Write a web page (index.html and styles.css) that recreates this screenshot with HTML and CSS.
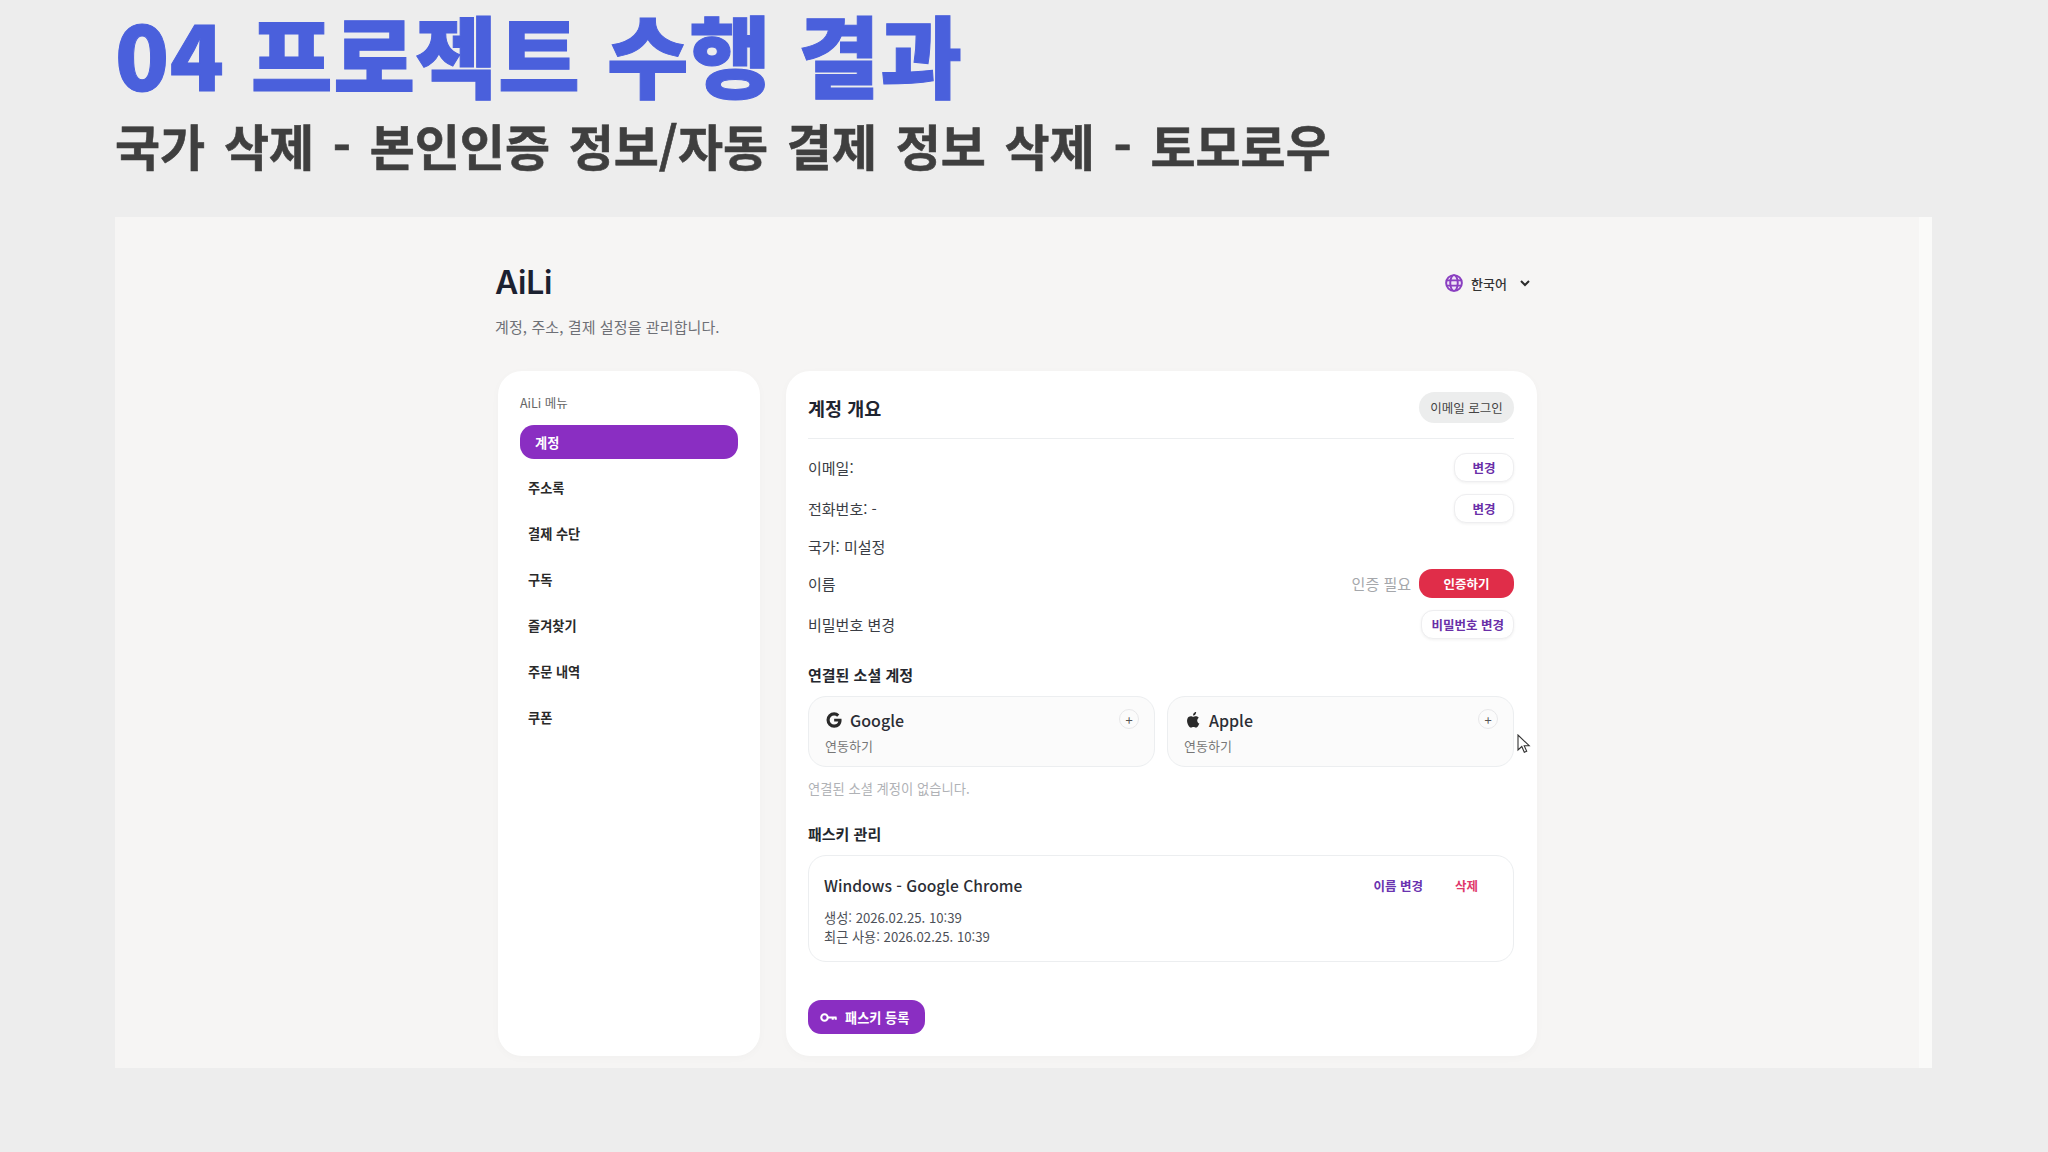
FILE: index.html
```html
<!DOCTYPE html>
<html lang="ko">
<head>
<meta charset="utf-8">
<title>04 프로젝트 수행 결과</title>
<link rel="stylesheet" href="styles.css">
</head>
<body>
<div class="slide">
  <header class="slide-head">
    <h1 class="slide-title">04 프로젝트 수행 결과</h1>
    <h2 class="slide-sub">국가 삭제 - 본인인증 정보/자동 결제 정보 삭제 - 토모로우</h2>
  </header>
  <div class="shot">
    <div class="page">
      <div class="brand-row">
        <div>
          <div class="brand">AiLi</div>
          <p class="brand-sub">계정, 주소, 결제 설정을 관리합니다.</p>
        </div>
        <div class="lang">
          <svg class="globe" viewBox="0 0 24 24" fill="#efe4f6" stroke="#8a3fc0" stroke-width="2.600"><circle cx="12" cy="12" r="10.500"/><ellipse cx="12" cy="12" rx="5" ry="10.500"/><path d="M2.500 8.500h19M2.500 15.500h19"/></svg>
          <span>한국어</span>
          <svg class="chev" viewBox="0 0 12 12" fill="none" stroke="#2b2b2b" stroke-width="2"><path d="M2 4l4 4 4-4"/></svg>
        </div>
      </div>
      <div class="columns">
        <nav class="side">
          <div class="side-label">AiLi 메뉴</div>
          <a class="nav-item active">계정</a>
          <a class="nav-item">주소록</a>
          <a class="nav-item">결제 수단</a>
          <a class="nav-item">구독</a>
          <a class="nav-item">즐겨찾기</a>
          <a class="nav-item">주문 내역</a>
          <a class="nav-item">쿠폰</a>
        </nav>
        <main class="main">
          <div class="main-head">
            <h3 class="main-title">계정 개요</h3>
            <span class="pill">이메일 로그인</span>
          </div>
          <div class="row r1"><span>이메일:</span><button class="btn-o small">변경</button></div>
          <div class="row r2"><span>전화번호: -</span><button class="btn-o small">변경</button></div>
          <div class="row r3"><span>국가: 미설정</span></div>
          <div class="row r4"><span>이름</span><div class="row-end"><span class="muted">인증 필요</span><button class="btn-red">인증하기</button></div></div>
          <div class="row r5"><span>비밀번호 변경</span><button class="btn-o">비밀번호 변경</button></div>

          <h4 class="sec sec-social">연결된 소셜 계정</h4>
          <div class="socials">
            <div class="social">
              <div class="social-top">
                <svg class="s-icon" viewBox="0 0 24 24" fill="#2a2a2a"><path d="M12.200 10.200v3.900h5.500c-.5 2.400-2.600 3.900-5.500 3.900a6 6 0 0 1 0-12c1.500 0 2.900.5 4 1.500l2.900-2.900A10.200 10.200 0 0 0 12.200 1.800a10.200 10.200 0 1 0 0 20.400c5.900 0 9.900-4.100 9.900-10 0-.7-.1-1.400-.2-2z"/></svg>
                <span class="s-name">Google</span>
                <span class="plus">+</span>
              </div>
              <div class="s-link">연동하기</div>
            </div>
            <div class="social">
              <div class="social-top">
                <svg class="s-icon" viewBox="0 0 24 24" fill="#2a2a2a"><path d="M17.600 12.700c0-2.500 2-3.700 2.100-3.800-1.200-1.700-3-1.900-3.600-2-1.500-.2-3 .9-3.800.9s-2-.9-3.300-.9c-1.700 0-3.300 1-4.100 2.500-1.800 3.100-.5 7.600 1.200 10.100.9 1.200 1.900 2.600 3.200 2.500 1.300 0 1.800-.8 3.300-.8s2 .8 3.300.8c1.400 0 2.300-1.200 3.100-2.400 1-1.400 1.400-2.800 1.400-2.800s-2.800-1.100-2.800-4.100zM15.100 4.500c.7-.9 1.200-2 1-3.200-1 0-2.200.7-2.900 1.500-.6.700-1.200 1.900-1 3.100 1.100.1 2.200-.6 2.900-1.400z"/></svg>
                <span class="s-name">Apple</span>
                <span class="plus">+</span>
              </div>
              <div class="s-link">연동하기</div>
            </div>
          </div>
          <p class="note">연결된 소셜 계정이 없습니다.</p>

          <h4 class="sec sec-pass">패스키 관리</h4>
          <div class="pass-card">
            <div class="pass-top">
              <span class="pass-name">Windows - Google Chrome</span>
              <span class="pass-actions"><a class="link-v">이름 변경</a><a class="link-r">삭제</a></span>
            </div>
            <div class="pass-meta">생성: 2026.02.25. 10:39</div>
            <div class="pass-meta">최근 사용: 2026.02.25. 10:39</div>
          </div>
          <button class="btn-pass">
            <svg class="key" viewBox="0 0 24 14" fill="none" stroke="#fff" stroke-width="2.800"><circle cx="6" cy="7" r="4.300"/><path d="M10.500 7H22M17 7v3M21 7v3"/></svg>
            패스키 등록
          </button>
        </main>
      </div>
    </div>
    <div class="sliver"></div>
    <svg class="cursor" viewBox="0 0 14 20" fill="#fff" stroke="#333" stroke-width="1.100"><path d="M1 1v15l3.800-3.500 2.500 5.800 2.400-1-2.500-5.600h5z"/></svg>
  </div>
</div>
</body>
</html>
```

FILE: styles.css
```css
* { box-sizing: border-box; }
html, body { margin: 0; padding: 0; }
body {
  font-family: "Noto Sans CJK KR", "Noto Sans", sans-serif;
  background: #ededed;
  color: #222;
}
.slide { width: 2048px; height: 1152px; overflow: hidden; background: #ededed; }
.slide-head { height: 217px; padding: 1px 0 0 115px; }
.slide-title {
  margin: 0;
  font-size: 89px;
  line-height: 104px;
  font-weight: 900;
  letter-spacing: 0.500px;
  word-spacing: 1px;
  color: #4a60dc;
  white-space: nowrap;
  -webkit-text-stroke: 1px #4a60dc;
}
.slide-sub {
  margin: 7px 0 0;
  font-size: 49px;
  line-height: 66px;
  font-weight: 700;
  letter-spacing: 0;
  word-spacing: 5px;
  color: #3f3f3f;
  white-space: nowrap;
  -webkit-text-stroke: 0.600px #3f3f3f;
}
.shot {
  position: relative;
  display: flex;
  width: 1817px;
  height: 851px;
  margin-left: 115px;
  background: #f6f5f4;
}
.page { width: 1804px; padding-left: 380px; }
.sliver { width: 13px; background: #fafaf9; }
.cursor { position: absolute; left: 1402px; top: 517px; width: 14px; height: 20px; }

.brand-row { display: flex; justify-content: space-between; width: 1036px; height: 154px; padding-top: 42px; }
.brand { font-family: Inter, "Noto Sans", sans-serif; font-size: 32px; line-height: 48px; font-weight: 600; color: #1c2130; letter-spacing: -0.300px; }
.brand-sub { margin: 9px 0 0; font-size: 15px; line-height: 22px; letter-spacing: 0.100px; color: #6e7076; }
.lang { display: flex; align-items: center; height: 48px; font-size: 13px; font-weight: 500; color: #333; }
.globe { width: 18px; height: 18px; margin-right: 8px; }
.chev { width: 12px; height: 12px; margin-left: 12px; }

.columns { display: flex; gap: 26px; margin-left: 3px; }
.side, .main { background: #fff; border-radius: 24px; height: 685px; box-shadow: 0 2px 10px rgba(0,0,0,.025); }
.side { width: 262px; padding: 22px 22px 0; }
.side-label { font-size: 12.500px; line-height: 20px; color: #666; margin-bottom: 12px; }
.nav-item { display: flex; align-items: center; height: 46px; padding-left: 8px; font-size: 13.200px; font-weight: 700; color: #2a2a2a; }
.nav-item.active { height: 34px; margin-bottom: 5px; padding-left: 15px; border-radius: 14px; background: #8a2ec2; color: #fff; }

.main { width: 751px; padding: 22px 23px 0 22px; }
.main-head { display: flex; justify-content: space-between; align-items: center; padding-bottom: 15px; box-sizing: content-box; border-bottom: 1px solid #eceef0; height: 30px; }
.main-title { margin: 0; font-size: 18.500px; line-height: 30px; font-weight: 700; color: #1f2430; }
.pill { display: flex; align-items: center; justify-content: center; width: 95px; height: 31px; margin-top: -1px; border-radius: 16px; background: #eceded; font-size: 12.500px; color: #444; }
.row { display: flex; justify-content: space-between; align-items: center; font-size: 15px; color: #3a3d44; }
.r1 { height: 31px; margin-top: 13px; }
.r2 { height: 31px; margin-top: 10px; }
.r3 { height: 22px; margin-top: 11px; }
.r4 { height: 29px; margin-top: 12px; }
.r5 { height: 31px; margin-top: 11px; }
.row-end { display: flex; align-items: center; gap: 8px; }
.muted { color: #a5a7ab; }
button { font-family: inherit; cursor: pointer; }
.btn-o { height: 29px; padding: 0 9px; border: 1px solid #eeeef0; border-radius: 12px; background: #fff; font-size: 12.500px; font-weight: 700; color: #6a2fa8; box-shadow: 0 1px 3px rgba(0,0,0,.06); }
.btn-o.small { width: 60px; }
.btn-red { width: 95px; height: 29px; padding: 0; border: 0; border-radius: 13px; background: #e02d49; color: #fff; font-size: 12.500px; font-weight: 700; }

.sec { margin: 0; font-size: 15px; line-height: 22px; font-weight: 700; color: #24272e; }
.sec-social { margin-top: 24px; }
.socials { display: grid; grid-template-columns: 1fr 1fr; gap: 12px; margin-top: 10px; }
.social { height: 71px; padding: 11px 16px; border: 1px solid #eceef0; border-radius: 18px; background: #fbfbfb; }
.social-top { display: flex; align-items: center; height: 24px; }
.s-icon { width: 18px; height: 18px; margin-right: 7px; flex: none; }
.s-name { flex: 1; font-size: 16px; font-weight: 500; color: #2b2e35; }
.plus { display: flex; align-items: center; justify-content: center; width: 20px; height: 20px; margin: -2px -1px 0 0; border: 1px solid #e8e8ea; border-radius: 50%; font-size: 13px; line-height: 1; color: #555; }
.s-link { margin-top: 5px; font-size: 13px; line-height: 18px; color: #777; }
.note { margin: 12px 0 0; font-size: 13.300px; line-height: 20px; color: #b0b2b6; }
.sec-pass { margin-top: 24px; }
.pass-card { height: 107px; margin-top: 10px; padding: 16px 15px; border: 1px solid #eceef0; border-radius: 18px; }
.pass-top { display: flex; justify-content: space-between; align-items: center; height: 26px; margin-bottom: 10px; }
.pass-name { font-size: 15.600px; font-weight: 500; color: #2b2e35; }
.pass-actions { display: flex; gap: 32px; padding-right: 20px; font-size: 12.500px; font-weight: 700; }
.link-v { color: #6a33b0; }
.link-r { color: #e0386a; }
.pass-meta { font-size: 13.200px; line-height: 19px; color: #4d5057; }
.btn-pass { display: flex; align-items: center; gap: 7px; width: 117px; height: 34px; margin-top: 38px; padding: 0 0 0 12px; border: 0; border-radius: 13px; background: #8a2ec2; color: #fff; font-size: 13.200px; font-weight: 700; white-space: nowrap; }
.key { width: 18px; height: 11px; flex: none; }
```
